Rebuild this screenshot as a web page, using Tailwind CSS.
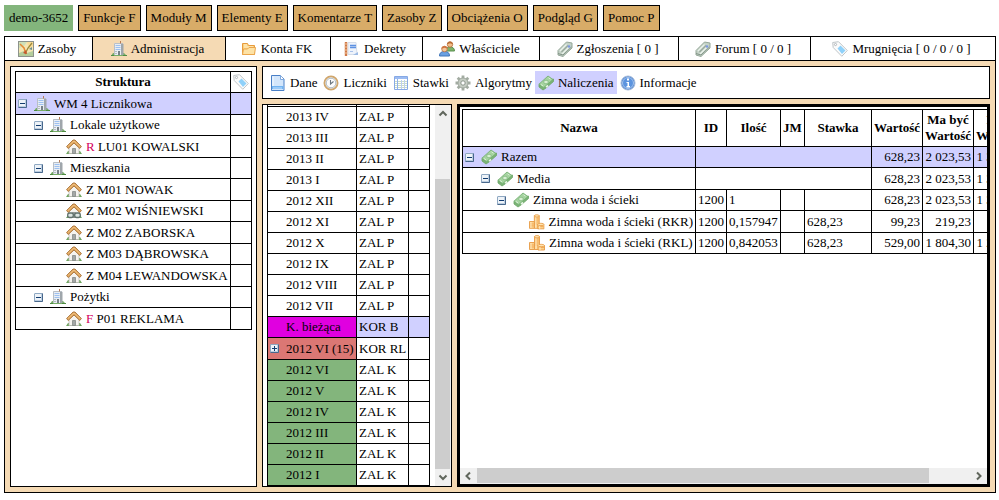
<!DOCTYPE html>
<html lang="pl">
<head>
<meta charset="utf-8">
<title>demo-3652</title>
<script src="https://cdn.jsdelivr.net/npm/@tailwindcss/browser@4"></script>
</head>
<body class="flex h-screen flex-col gap-[5px] overflow-hidden bg-white pt-[5px] pr-[3px] pb-[7px] pl-1 text-[13px] leading-4 text-black [font-family:'Liberation_Serif','Times_New_Roman',serif]">

<svg class="hidden" aria-hidden="true">
  <symbol id="map" viewBox="0 0 16 16"><rect x=".5" y=".5" width="15" height="15" fill="#f5e6b4" stroke="#8d938c"/><path d="M1 1h8L6 5 1 7z" fill="#cfe0b8"/><path d="M9 1h6v4l-4 3z" fill="#f9dc98"/><path d="M1 15v-3l5-2 3 2 6-2v5z" fill="#b4cd9c"/><path d="M2 3l4 4 2 6" stroke="#e58a35" stroke-width="1.500" fill="none"/><path d="M14 2l-4 5-3 6" stroke="#9c8a3c" stroke-width="1.300" fill="none"/><path d="M5 12l3-3 1 4z" fill="#c8552f"/><path d="M11 8l3-2v3z" fill="#6a8f92"/></symbol>
  <symbol id="building" viewBox="0 0 16 16"><path d="M0 15l2-3h11l3 3z" fill="#77ad68"/><path d="M3 2h7v12H3z" fill="#e9eef4"/><path d="M10 2l2.500 1v11H10z" fill="#9fa6ab"/><path d="M3.500 14V2.500h8.500" fill="none" stroke="#b9bfc6"/><path d="M4.500 4.500h5M4.500 6.500h5M4.500 8.500h5" stroke="#9dc0f0"/><path d="M7 10h2v4H7z" fill="#788288"/><path d="M4 10.500h2M4 12.500h2" stroke="#b5bcc2"/><path d="M9.500 0v2.500" stroke="#b87a55"/><path d="M0 14.500h3M12 14.500h4" stroke="#4f8b44"/></symbol>
  <symbol id="folder" viewBox="0 0 16 16"><path d="M1.500 13.500v-11h5l1 2h6v9z" fill="#fbd07c" stroke="#e79b3c"/><path d="M3 4h3M3 6h9" stroke="#fff4d6"/><path d="M1.500 13.500l1-5.500h4l1.500-1.500h6.500l-1 7z" fill="#fde2a5" stroke="#eba64c"/></symbol>
  <symbol id="book" viewBox="0 0 16 16"><path d="M4 1.500h8l1 12H4z" fill="#eef3fb" stroke="#d6deea"/><path d="M2 1v14" stroke="#cf7a4a" stroke-width="2.400"/><path d="M.500 3h3M.500 6h3M.500 9h3M.500 12h3" stroke="#f4c79d"/><path d="M6 4.500h6M6 6.500h6" stroke="#5d91e2" stroke-width="1.300"/><path d="M6 10.500h3" stroke="#a9c2ea"/><path d="M9 14l5-3v3z" fill="#9dbbe5"/></symbol>
  <symbol id="users" viewBox="0 0 16 16"><path d="M7 10c0-3 1.500-4 4-4s4.500 1 4.500 4z" fill="#7fb36a" stroke="#5b9050"/><circle cx="11" cy="3.500" r="2.700" fill="#f2bf8a" stroke="#b36c34" stroke-width=".8"/><path d="M8 3.300c.5-3.800 5.500-3.800 6 0l-3-1z" fill="#b96a33"/><path d="M.500 15c0-3 1.500-4.500 5-4.500s5 1.500 5 4.500z" fill="#6aa0e2" stroke="#3f74b8"/><circle cx="5.500" cy="8" r="2.800" fill="#f4c698" stroke="#bf7544" stroke-width=".8"/><path d="M2.400 7.800c.5-3.800 5.700-3.800 6.200 0l-3-1z" fill="#cf7440"/></symbol>
  <symbol id="ticket" viewBox="0 0 16 16"><path d="M1 9.500L9.500 1l5.500 1v5l-9 8.500-5-1.500z" fill="#c4d2c7" stroke="#94a698"/><path d="M3 10l6.500-6.500M5 13l8-8" stroke="#eaf2eb" stroke-width="1.200"/><path d="M4.500 11L11 4.500" stroke="#9aaa9d" stroke-width="1.200"/><path d="M1 12.500l5 1.500 8.500-8" fill="none" stroke="#829487"/><circle cx="12" cy="5.500" r="1.300" fill="#7b98e0"/></symbol>
  <symbol id="tag" viewBox="0 0 16 16"><path d="M.700 1.500l5.800-.8 8.800 8.800-5.500 5.800L1.200 6.500z" fill="#fbfbfb" stroke="#bfc5c8"/><circle cx="3.500" cy="3.500" r="1.100" fill="#fff" stroke="#b2b8bc"/><path d="M5.500 7.500l3-3 5 5-3.500 3.500z" fill="#8fd1fa"/></symbol>
  <symbol id="doc" viewBox="0 0 16 16"><path d="M1.500.500h9l3.500 3.500v11.500H1.500z" fill="#d3e6fb" stroke="#4a80c7"/><path d="M10.500.500v4H14" fill="#fff" stroke="#7fa9df"/><path d="M3 1.500v10" stroke="#f5faff"/><path d="M2 12.500h11.500" stroke="#72b4f2" stroke-width="3"/><path d="M3 13h9" stroke="#c4e2ff"/></symbol>
  <symbol id="clock" viewBox="0 0 16 16"><circle cx="8" cy="8" r="6.600" fill="#f1f3f4" stroke="#d0a66c" stroke-width="1.800"/><circle cx="8" cy="8" r="4.800" fill="#fdfdfd" stroke="#a8b4be" stroke-width=".9"/><path d="M7.500 5V9l3-2.500" fill="none" stroke="#6d7881" stroke-width="1.100"/></symbol>
  <symbol id="sheet" viewBox="0 0 16 16"><path d="M1.500 1.500h13v13h-13z" fill="#fff" stroke="#86a9e5"/><path d="M2 3h12" stroke="#9dbcf2" stroke-width="2"/><path d="M2 6.500h12M2 8.500h12M2 10.500h12M2 12.500h12" stroke="#c9dcc6"/><path d="M4.500 4v10" stroke="#8fb2ec"/><path d="M8.500 5v9M11.500 5v9" stroke="#bccff0"/></symbol>
  <symbol id="gear" viewBox="0 0 16 16"><path d="M8 .500v15M.500 8h15M2.700 2.700l10.600 10.600M13.300 2.700L2.700 13.300" stroke="#a3aca2" stroke-width="2.800"/><circle cx="8" cy="8" r="5" fill="#c6cdc4" stroke="#a0a99f"/><circle cx="8" cy="8" r="2.200" fill="#fff" stroke="#8b958a"/></symbol>
  <symbol id="money" viewBox="0 0 16 16"><path d="M1 9.500V12l4 3 3-2 7.500-6.500V4z" fill="#7cb377" stroke="#6aa566" stroke-width=".8"/><path d="M.800 9.300L10 1l5 3.500-9.500 8.300z" fill="#a5d3a0" stroke="#70ac6d" stroke-width=".8"/><ellipse cx="8" cy="7" rx="2.300" ry="1.800" fill="#d8efd4" stroke="#7db57a" stroke-width=".7"/><path d="M3 9.500l2 1.300M10.500 2.800l2 1.400" stroke="#d8efd4"/><path d="M7.500 11.500l2-1.700 1 1.400-2 1.600z" fill="#e8f6e5"/></symbol>
  <symbol id="info" viewBox="0 0 16 16"><circle cx="8" cy="8" r="7" fill="#4a82cf" stroke="#a9bddb"/><circle cx="8" cy="8" r="5.500" fill="#5c94df" stroke="#dce9fa" stroke-width=".6"/><path d="M7 3.500h2v2H7zM6.500 7H9v4h1v1.500H6.500V11h1V8h-1z" fill="#fff"/></symbol>
  <symbol id="house" viewBox="0 0 16 16"><path d="M0 15l2-3h12l2 3z" fill="#6fa560"/><path d="M3 14.500V8l5-5 5 5v6.500z" fill="#f5f3ef" stroke="#bdbbb5" stroke-width=".8"/><path d="M6.500 14.500V9.500h3v5z" fill="#a3a7a6" stroke="#7d8180" stroke-width=".7"/><path d="M.600 7.500L7 1h2l6.400 6.500-1.600 2L8 4 2.200 9.500z" fill="#dfa45c" stroke="#a8733a" stroke-width=".9"/><path d="M2 7.500L8 2l6 5.500" stroke="#f3c98c" stroke-width=".8" fill="none"/></symbol>
  <symbol id="linked" viewBox="0 0 16 16"><use href="#house"/><path d="M3 12h11" stroke="#627078"/><rect x="1.700" y="10" width="5.600" height="4.500" rx="2" fill="#dce5e2" stroke="#5f706c" stroke-width="1.300"/><rect x="8.700" y="10" width="5.600" height="4.500" rx="2" fill="#dce5e2" stroke="#5f706c" stroke-width="1.300"/></symbol>
  <symbol id="coins" viewBox="0 0 16 16"><g fill="#fcd08a" stroke="#e79a45" stroke-width=".9"><path d="M5.500 1.500h5v13h-5z"/><path d="M.500 7.500h5v7h-5z"/><path d="M9 10.500h6.500v4.500H9z"/></g><path d="M6 4h4M6 6h4M6 8h4M6 10h3M1 10h4M1 12h4M9.500 12.500H15" stroke="#f3ab56"/><path d="M7 2v12M2 8v6M11 11v4" stroke="#ffecc6"/><g fill="#ffe4b0" stroke="#e79a45" stroke-width=".8"><ellipse cx="8" cy="1.700" rx="2.500" ry="1.200"/><ellipse cx="12.200" cy="10.500" rx="3.200" ry="1.200"/></g></symbol>
  <symbol id="minus" viewBox="0 0 9 9"><rect x=".5" y=".5" width="8" height="8" rx=".5" fill="#eef3f8" stroke="#8fa8c2"/><path d="M.500 8.500h8v-8" fill="none" stroke="#48688c"/><path d="M1 7.500h7M7.500 1v7" stroke="#bccde0"/><path d="M2 4.500h5" stroke="#123c70"/></symbol>
  <symbol id="plus" viewBox="0 0 9 9"><rect x=".5" y=".5" width="8" height="8" rx=".5" fill="#eef3f8" stroke="#8fa8c2"/><path d="M.500 8.500h8v-8" fill="none" stroke="#48688c"/><path d="M1 7.500h7M7.500 1v7" stroke="#bccde0"/><path d="M2 4.500h5M4.500 2v5" stroke="#123c70"/></symbol>
</svg>

<nav class="flex h-[26px] shrink-0 gap-[5px] [&>button]:border [&>button]:px-1 [&>button]:whitespace-nowrap">
  <button class="border-[#83b57c] bg-[#83b57c]">demo-3652</button>
  <button class="border-black bg-[#d8ac68]">Funkcje F</button>
  <button class="border-black bg-[#d8ac68]">Moduły M</button>
  <button class="border-black bg-[#d8ac68]">Elementy E</button>
  <button class="border-black bg-[#d8ac68]">Komentarze T</button>
  <button class="border-black bg-[#d8ac68]">Zasoby Z</button>
  <button class="border-black bg-[#d8ac68]">Obciążenia O</button>
  <button class="border-black bg-[#d8ac68]">Podgląd G</button>
  <button class="border-black bg-[#d8ac68]">Pomoc P</button>
</nav>

<div class="flex min-h-0 flex-1 flex-col border border-black bg-[#f5dab4]">
  <nav class="grid h-6 shrink-0 grid-cols-[88fr_133fr_105fr_92fr_117fr_139fr_132fr_184fr] border-b border-black bg-white [&>a]:flex [&>a]:items-center [&>a]:justify-center [&>a]:gap-1 [&>a]:border-r [&>a]:border-black [&>a]:pr-[3px] [&>a]:whitespace-nowrap [&>a:last-child]:border-r-0 [&_svg]:size-4">
    <a href="#"><svg><use href="#map"/></svg>Zasoby</a>
    <a href="#" class="bg-[#f5dab4]"><svg><use href="#building"/></svg>Administracja</a>
    <a href="#"><svg><use href="#folder"/></svg>Konta FK</a>
    <a href="#"><svg><use href="#book"/></svg>Dekrety</a>
    <a href="#"><svg><use href="#users"/></svg>Właściciele</a>
    <a href="#"><svg><use href="#ticket"/></svg>Zgłoszenia [ 0 ]</a>
    <a href="#"><svg><use href="#ticket"/></svg>Forum [ 0 / 0 ]</a>
    <a href="#"><svg><use href="#tag"/></svg>Mrugnięcia [ 0 / 0 / 0 ]</a>
  </nav>

  <div class="flex min-h-0 flex-1 gap-[5px] p-[5px]">
    <aside class="shrink-0 border border-black bg-white p-1">
      <table class="w-[237px] table-fixed border-collapse whitespace-nowrap [&_button]:w-4 [&_button_svg]:size-[9px] [&_div]:flex [&_div]:items-center [&_div]:pl-[2px] [&_div>svg]:mr-1 [&_div>svg]:size-4 [&_td]:border [&_td]:border-black [&_td]:p-0 [&_th]:border [&_th]:border-black [&_th]:p-0">
        <colgroup><col class="w-[215px]"><col class="w-[21px]"></colgroup>
        <thead><tr class="h-[21px]"><th>Struktura</th><th aria-label="Etykiety"><svg class="mx-auto size-4"><use href="#tag"/></svg></th></tr></thead>
        <tbody class="[&>tr:nth-child(even)]:h-[21px] [&>tr:nth-child(odd)]:h-[22px]">
          <tr class="bg-[#d0d0ff]"><td><div><button aria-label="Zwiń"><svg><use href="#minus"/></svg></button><svg><use href="#building"/></svg>WM 4 Licznikowa</div></td><td></td></tr>
          <tr><td><div class="ml-4"><button aria-label="Zwiń"><svg><use href="#minus"/></svg></button><svg><use href="#building"/></svg>Lokale użytkowe</div></td><td></td></tr>
          <tr><td><div class="ml-12"><svg><use href="#house"/></svg><span><span class="text-[#d4005c]">R</span> LU01 KOWALSKI</span></div></td><td></td></tr>
          <tr><td><div class="ml-4"><button aria-label="Zwiń"><svg><use href="#minus"/></svg></button><svg><use href="#building"/></svg>Mieszkania</div></td><td></td></tr>
          <tr><td><div class="ml-12"><svg><use href="#house"/></svg>Z M01 NOWAK</div></td><td></td></tr>
          <tr><td><div class="ml-12"><svg><use href="#linked"/></svg>Z M02 WIŚNIEWSKI</div></td><td></td></tr>
          <tr><td><div class="ml-12"><svg><use href="#house"/></svg>Z M02 ZABORSKA</div></td><td></td></tr>
          <tr><td><div class="ml-12"><svg><use href="#house"/></svg>Z M03 DĄBROWSKA</div></td><td></td></tr>
          <tr><td><div class="ml-12"><svg><use href="#house"/></svg>Z M04 LEWANDOWSKA</div></td><td></td></tr>
          <tr><td><div class="ml-4"><button aria-label="Zwiń"><svg><use href="#minus"/></svg></button><svg><use href="#building"/></svg>Pożytki</div></td><td></td></tr>
          <tr><td><div class="ml-12"><svg><use href="#house"/></svg><span><span class="text-[#d4005c]">F</span> P01 REKLAMA</span></div></td><td></td></tr>
        </tbody>
      </table>
    </aside>

    <main class="flex min-w-0 flex-1 flex-col gap-[5px]">
      <nav class="flex h-[33px] shrink-0 border border-black bg-white p-1 [&>a]:flex [&>a]:items-center [&>a]:gap-1 [&>a]:px-[3px] [&_svg]:size-4">
        <a href="#"><svg><use href="#doc"/></svg>Dane</a>
        <a href="#"><svg><use href="#clock"/></svg>Liczniki</a>
        <a href="#"><svg><use href="#sheet"/></svg>Stawki</a>
        <a href="#"><svg><use href="#gear"/></svg>Algorytmy</a>
        <a href="#" class="bg-[#d0d0ff]"><svg><use href="#money"/></svg>Naliczenia</a>
        <a href="#"><svg><use href="#info"/></svg>Informacje</a>
      </nav>

      <div class="flex min-h-0 flex-1 gap-[5px]">
        <section class="flex w-[190px] shrink-0 justify-between border border-black bg-white pl-1">
          <div class="flex min-h-0 flex-col justify-end overflow-hidden">
            <table class="w-[163px] shrink-0 table-fixed border-collapse whitespace-nowrap [&_button]:absolute [&_button]:top-[6px] [&_button]:left-[2px] [&_button_svg]:size-[9px] [&_td]:border [&_td]:border-black [&_td]:p-0 [&_td]:pl-[2px] [&_td:first-child]:relative [&_td:first-child]:pl-[18px] [&_tr]:h-[21px]">
              <colgroup><col class="w-[89px]"><col class="w-[52px]"><col class="w-[21px]"></colgroup>
              <tbody>
                <tr><td></td><td></td><td></td></tr>
                <tr><td>2013 IV</td><td>ZAL P</td><td></td></tr>
                <tr><td>2013 III</td><td>ZAL P</td><td></td></tr>
                <tr><td>2013 II</td><td>ZAL P</td><td></td></tr>
                <tr><td>2013 I</td><td>ZAL P</td><td></td></tr>
                <tr><td>2012 XII</td><td>ZAL P</td><td></td></tr>
                <tr><td>2012 XI</td><td>ZAL P</td><td></td></tr>
                <tr><td>2012 X</td><td>ZAL P</td><td></td></tr>
                <tr><td>2012 IX</td><td>ZAL P</td><td></td></tr>
                <tr><td>2012 VIII</td><td>ZAL P</td><td></td></tr>
                <tr><td>2012 VII</td><td>ZAL P</td><td></td></tr>
                <tr class="bg-[#d0d0ff]"><td class="bg-[#e000e0]">K. bieżąca</td><td>KOR B</td><td></td></tr>
                <tr><td class="h-[22px] bg-[#db7774]"><button aria-label="Rozwiń"><svg><use href="#plus"/></svg></button>2012 VI (15)</td><td>KOR RL</td><td></td></tr>
                <tr><td class="bg-[#83b57c]">2012 VI</td><td>ZAL K</td><td></td></tr>
                <tr><td class="bg-[#83b57c]">2012 V</td><td>ZAL K</td><td></td></tr>
                <tr><td class="bg-[#83b57c]">2012 IV</td><td>ZAL K</td><td></td></tr>
                <tr><td class="bg-[#83b57c]">2012 III</td><td>ZAL K</td><td></td></tr>
                <tr><td class="bg-[#83b57c]">2012 II</td><td>ZAL K</td><td></td></tr>
                <tr><td class="bg-[#83b57c]">2012 I</td><td>ZAL K</td><td></td></tr>
              </tbody>
            </table>
          </div>
          <div class="flex w-4 flex-col bg-[#f0f0f0]" aria-hidden="true">
            <svg class="h-[17px] w-4 shrink-0" viewBox="0 0 16 17"><path d="M4.500 10.500L8 7l3.500 3.500" fill="none" stroke="#60665c" stroke-width="2"/></svg>
            <div class="flex flex-1 flex-col"><div class="flex-[57]"></div><div class="mr-px flex-[290] bg-[#cdcdcd]"></div></div>
            <svg class="h-[17px] w-4 shrink-0" viewBox="0 0 16 17"><path d="M4.500 6.500L8 10l3.500-3.500" fill="none" stroke="#60665c" stroke-width="2"/></svg>
          </div>
        </section>

        <section class="flex min-w-0 flex-1 flex-col border-[3px] border-black bg-white">
          <div class="min-h-0 flex-1 overflow-hidden pt-[2px] pl-[2px]">
            <table class="w-[563px] table-fixed border-collapse whitespace-nowrap [&_button]:w-4 [&_button_svg]:size-[9px] [&_div]:flex [&_div]:items-center [&_div>svg]:mr-1 [&_div>svg]:size-4 [&_td]:border [&_td]:border-black [&_td]:p-0 [&_td]:px-[2px] [&_th]:border [&_th]:border-black [&_th]:p-0">
              <colgroup><col class="w-[233px]"><col class="w-[31px]"><col class="w-[54px]"><col class="w-[24px]"><col class="w-[67px]"><col class="w-[51px]"><col class="w-[51px]"><col class="w-[51px]"></colgroup>
              <thead><tr class="h-[37px]"><th>Nazwa</th><th>ID</th><th>Ilość</th><th>JM</th><th>Stawka</th><th>Wartość</th><th>Ma być<br>Wartość</th><th>Róż.<br>Wartość</th></tr></thead>
              <tbody class="[&>tr:nth-child(even)]:h-[22px] [&>tr:nth-child(odd)]:h-[21px]">
                <tr class="bg-[#d0d0ff]"><td><div><button aria-label="Zwiń"><svg><use href="#minus"/></svg></button><svg><use href="#money"/></svg>Razem</div></td><td colspan="4"></td><td class="text-right">628,23</td><td class="text-right">2 023,53</td><td class="text-right">1 395,30</td></tr>
                <tr><td><div class="ml-4"><button aria-label="Zwiń"><svg><use href="#minus"/></svg></button><svg><use href="#money"/></svg>Media</div></td><td colspan="4"></td><td class="text-right">628,23</td><td class="text-right">2 023,53</td><td class="text-right">1 395,30</td></tr>
                <tr><td><div class="ml-8"><button aria-label="Zwiń"><svg><use href="#minus"/></svg></button><svg><use href="#money"/></svg>Zimna woda i ścieki</div></td><td>1200</td><td>1</td><td></td><td></td><td class="text-right">628,23</td><td class="text-right">2 023,53</td><td class="text-right">1 395,30</td></tr>
                <tr><td><div class="ml-16"><svg><use href="#coins"/></svg>Zimna woda i ścieki (RKR)</div></td><td>1200</td><td>0,157947</td><td></td><td>628,23</td><td class="text-right">99,23</td><td class="text-right">219,23</td><td class="text-right">120,00</td></tr>
                <tr><td><div class="ml-16"><svg><use href="#coins"/></svg>Zimna woda i ścieki (RKL)</div></td><td>1200</td><td>0,842053</td><td></td><td>628,23</td><td class="text-right">529,00</td><td class="text-right">1 804,30</td><td class="text-right">1 275,30</td></tr>
              </tbody>
            </table>
          </div>
          <div class="flex h-4 shrink-0 bg-[#f0f0f0]" aria-hidden="true">
            <svg class="h-4 w-[17px] shrink-0" viewBox="0 0 17 16"><path d="M10 4.500L6.500 8l3.500 3.500" fill="none" stroke="#60665c" stroke-width="2"/></svg>
            <div class="flex flex-1"><div class="mb-px flex-[452] bg-[#cdcdcd]"></div><div class="flex-[41]"></div></div>
            <svg class="h-4 w-[17px] shrink-0" viewBox="0 0 17 16"><path d="M7 4.500L10.500 8 7 11.500" fill="none" stroke="#60665c" stroke-width="2"/></svg>
          </div>
        </section>
      </div>
    </main>
  </div>
</div>
</body>
</html>
